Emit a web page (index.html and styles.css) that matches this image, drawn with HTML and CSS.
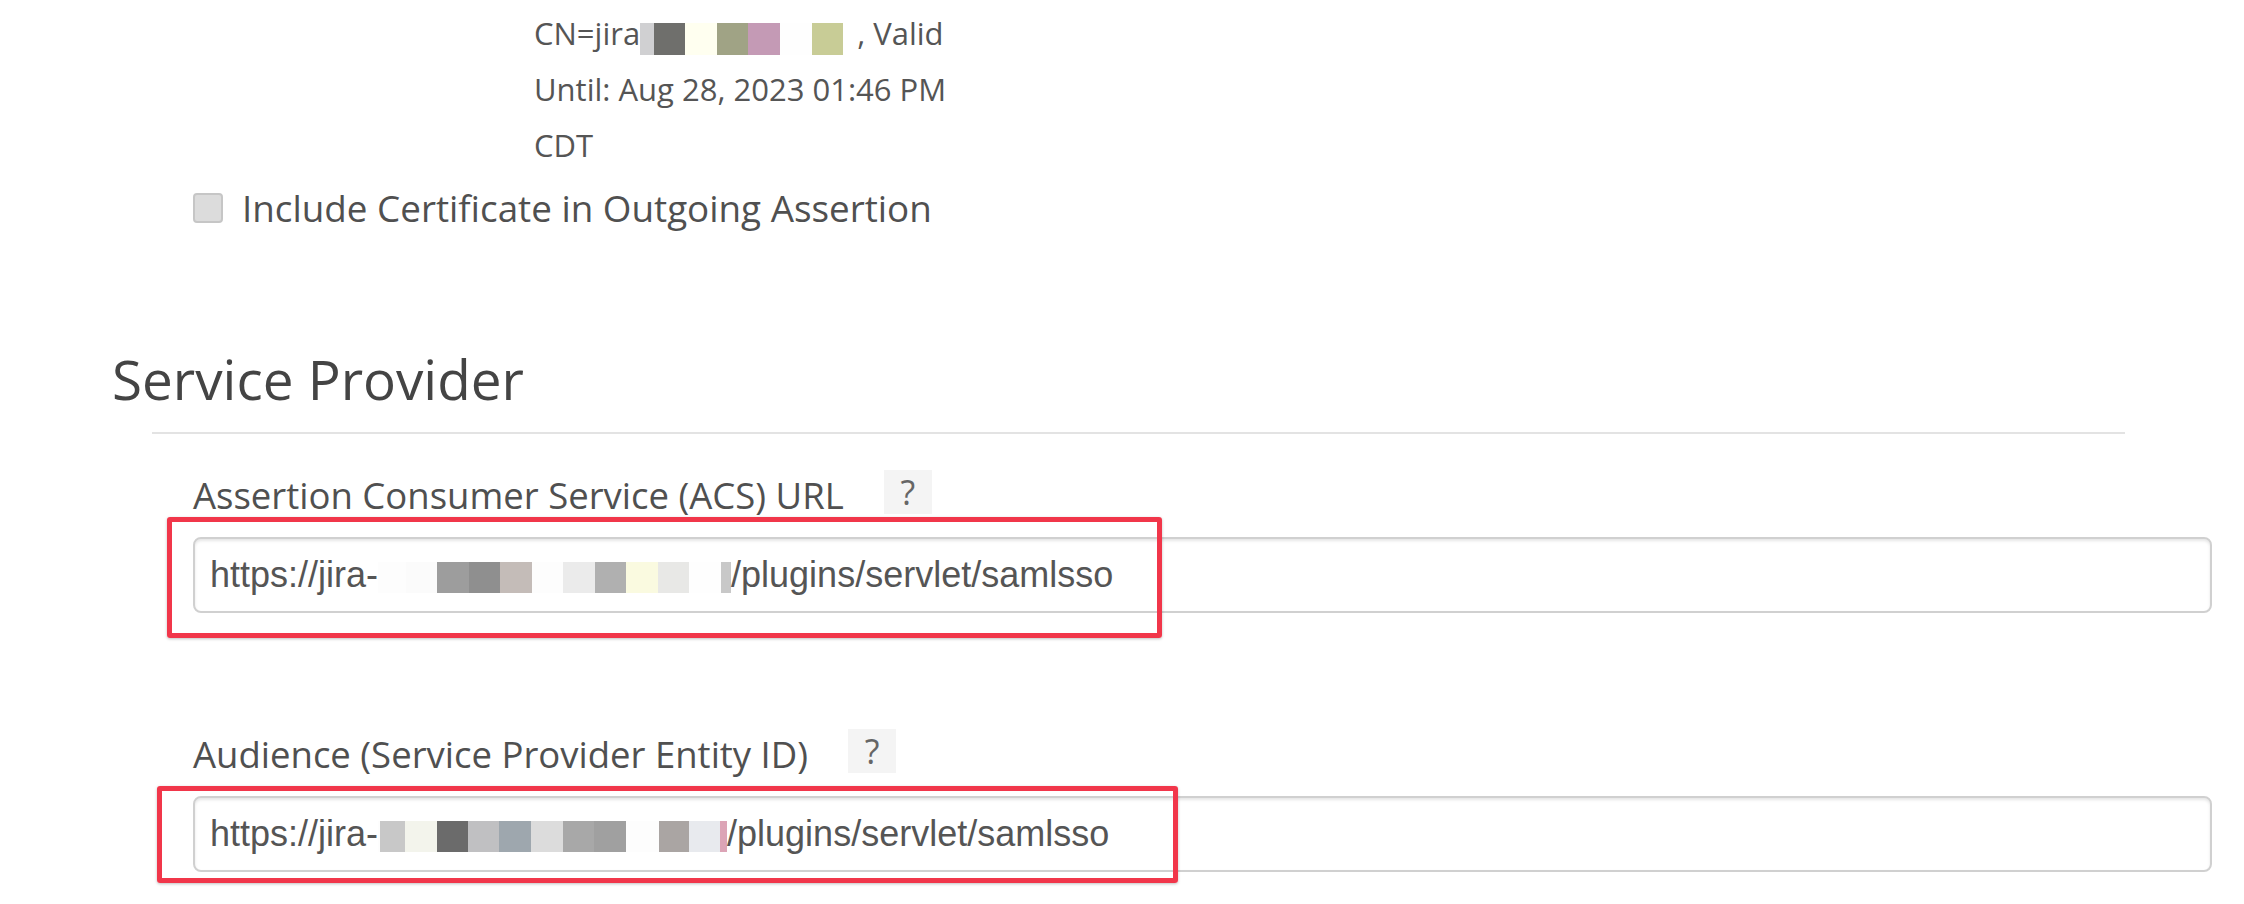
FILE: index.html
```html
<!doctype html>
<html lang="en">

<head>
  <meta charset="UTF-8">
  <title>SAML Service Provider</title>
  <link rel="stylesheet" href="styles.css">
</head>

<body>
  <main id="saml_settings">
    <section id="certificate">
      <p class="cert_value">CN=jira<span class="redact cert_redact"><i class="px w14 c_d0d0d2"></i><i class="px w31 c_6f6f6c"></i><i class="px w32 c_fffff0"></i><i class="px w31 c_a0a385"></i><i class="px w32 c_c49ab5"></i><i class="px w32 c_fefefe"></i><i class="px w31 c_c8cc96"></i></span>, Valid Until: Aug 28, 2023 01:46 PM CDT</p>
      <label class="check_row">
        <input type="checkbox" id="include_cert_checkbox"> Include Certificate in Outgoing Assertion
      </label>
    </section>

    <section id="service_provider">
      <h2>Service Provider</h2>
      <div class="rule"></div>

      <div class="field" id="acs_field">
        <div class="field_label">
          <span>Assertion Consumer Service (ACS) URL</span>
          <span class="help">?</span>
        </div>
        <div class="field_box">
          <div class="text_input">https://jira-<span class="redact"><i class="px w28 c_fdfdfd"></i><i class="px w31 c_fbfbfb"></i><i class="px w32 c_9d9d9d"></i><i class="px w31 c_8f8f8f"></i><i class="px w32 c_c4bcb8"></i><i class="px w31 c_fdfdfd"></i><i class="px w32 c_ebebeb"></i><i class="px w31 c_b0b0b0"></i><i class="px w32 c_fafae0"></i><i class="px w31 c_e8e8e6"></i><i class="px w32 c_fefefe"></i><i class="px w10 c_c8c8c8"></i></span>/plugins/servlet/samlsso</div>
          <div class="mark mark_acs"></div>
        </div>
      </div>

      <div class="field" id="audience_field">
        <div class="field_label">
          <span>Audience (Service Provider Entity ID)</span>
          <span class="help">?</span>
        </div>
        <div class="field_box">
          <div class="text_input">https://jira-<span class="redact"><i class="px w2 c_fdfdfd"></i><i class="px w25 c_c8c8c8"></i><i class="px w32 c_f3f4ec"></i><i class="px w31 c_6b6b6b"></i><i class="px w31 c_c0c0c2"></i><i class="px w32 c_9ea7ae"></i><i class="px w32 c_dcdcdc"></i><i class="px w31 c_a8a8a8"></i><i class="px w32 c_a0a0a0"></i><i class="px w33 c_fdfdfd"></i><i class="px w30 c_aaa5a3"></i><i class="px w31 c_e8eaee"></i><i class="px w7 c_dca4b6"></i></span>/plugins/servlet/samlsso</div>
          <div class="mark mark_audience"></div>
        </div>
      </div>
    </section>
  </main>
</body>
</html>
```

FILE: styles.css
```css
* {
  box-sizing: border-box;
  padding: 0;
  margin: 0;
}

body {
  font-family: "Open Sans", "DejaVu Sans", sans-serif;
  background: #fff;
  color: #505050;
  width: 2244px;
  height: 904px;
  overflow: hidden;
}

/* certificate block */
section#certificate {
  padding-top: 5px;
}

p.cert_value {
  margin-left: 534px;
  width: 440px;
  font-size: 31px;
  line-height: 56px;
  color: #555;
}

.cert_redact {
  margin-right: 14px;
}

.cert_redact .px {
  height: 32px;
  vertical-align: -10px;
}

label.check_row {
  display: flex;
  align-items: center;
  gap: 19px;
  height: 40px;
  margin-top: 15px;
  margin-left: 193px;
  font-size: 36.8px;
  color: #505050;
}

label.check_row input[type=checkbox] {
  appearance: none;
  width: 30px;
  height: 30px;
  background: #dcdcdc;
  border: 2px solid #c6c6c6;
  border-radius: 4px;
}

/* service provider */
section#service_provider h2 {
  margin-top: 121px;
  margin-left: 112px;
  font-size: 54.8px;
  line-height: 60px;
  font-weight: normal;
  color: #444;
}

.rule {
  margin-top: 23px;
  margin-left: 152px;
  width: 1973px;
  height: 2px;
  background: #e3e3e3;
}

.field {
  margin-left: 193px;
  width: 2019px;
}

#acs_field {
  margin-top: 39px;
}

#audience_field {
  margin-top: 119px;
}

.field_label {
  display: flex;
  align-items: center;
  height: 44px;
  font-size: 36.5px;
  line-height: 44px;
  color: #505050;
}

.help {
  margin-left: 40px;
  margin-top: -6px;
  width: 48px;
  height: 44px;
  background: #f4f4f4;
  color: #666;
  font-size: 34px;
  line-height: 44px;
  text-align: center;
}

.field_box {
  position: relative;
  margin-top: 20px;
}

.text_input {
  height: 76px;
  padding-left: 15px;
  border: 2px solid #d0d0d0;
  border-radius: 8px;
  box-shadow: inset 0 2px 3px rgba(0, 0, 0, 0.1);
  font-family: "Liberation Sans", Arial, sans-serif;
  font-size: 36px;
  line-height: 72px;
  color: #555;
  white-space: nowrap;
}

/* pixelated redaction blocks */
.redact {
  white-space: nowrap;
}

.px {
  display: inline-block;
  height: 31px;
  vertical-align: middle;
}

.w2 { width: 2px; }
.w7 { width: 7px; }
.w10 { width: 10px; }
.w14 { width: 14px; }
.w25 { width: 25px; }
.w28 { width: 28px; }
.w30 { width: 30px; }
.w31 { width: 31px; }
.w32 { width: 32px; }
.w33 { width: 33px; }

.c_d0d0d2 { background: #d0d0d2; }
.c_6f6f6c { background: #6f6f6c; }
.c_fffff0 { background: #fffff0; }
.c_a0a385 { background: #a0a385; }
.c_c49ab5 { background: #c49ab5; }
.c_fefefe { background: #fefefe; }
.c_c8cc96 { background: #c8cc96; }
.c_fdfdfd { background: #fdfdfd; }
.c_fbfbfb { background: #fbfbfb; }
.c_9d9d9d { background: #9d9d9d; }
.c_8f8f8f { background: #8f8f8f; }
.c_c4bcb8 { background: #c4bcb8; }
.c_ebebeb { background: #ebebeb; }
.c_b0b0b0 { background: #b0b0b0; }
.c_fafae0 { background: #fafae0; }
.c_e8e8e6 { background: #e8e8e6; }
.c_c8c8c8 { background: #c8c8c8; }
.c_f3f4ec { background: #f3f4ec; }
.c_6b6b6b { background: #6b6b6b; }
.c_c0c0c2 { background: #c0c0c2; }
.c_9ea7ae { background: #9ea7ae; }
.c_dcdcdc { background: #dcdcdc; }
.c_a8a8a8 { background: #a8a8a8; }
.c_a0a0a0 { background: #a0a0a0; }
.c_aaa5a3 { background: #aaa5a3; }
.c_e8eaee { background: #e8eaee; }
.c_dca4b6 { background: #dca4b6; }

/* red highlight annotations drawn over the inputs */
.mark {
  position: absolute;
  border: 5px solid #f1364a;
  border-radius: 3px;
  box-shadow: 0 1px 3px rgba(0, 0, 0, 0.25);
  pointer-events: none;
}

.mark_acs {
  left: -26px;
  top: -20px;
  width: 995px;
  height: 121px;
}

.mark_audience {
  left: -36px;
  top: -10px;
  width: 1021px;
  height: 97px;
}
```
